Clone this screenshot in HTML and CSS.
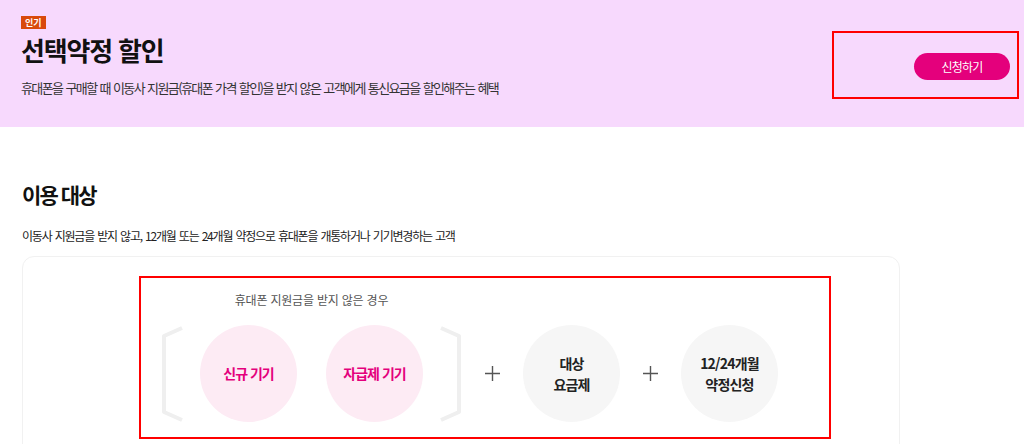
FILE: index.html
```html
<!DOCTYPE html>
<html lang="ko">
<head>
  <meta charset="UTF-8" />
  <meta name="viewport" content="width=device-width, initial-scale=1.0"/>
  <title>선택약정 할인</title>
  <link rel="stylesheet" href="styles.css">
</head>
<body>
  <header class="hero">
    <div class="hero-text">
      <span class="badge">인기</span>
      <h1>선택약정 할인</h1>
      <p class="hero-desc">휴대폰을 구매할 때 이동사 지원금(휴대폰 가격 할인)을 받지 않은 고객에게 통신요금을 할인해주는 혜택</p>
    </div>
    <div class="apply-box">
      <button class="apply-btn">신청하기</button>
    </div>
  </header>

  <section class="target">
    <h2>이용 대상</h2>
    <p class="target-desc">이동사 지원금을 받지 않고, 12개월 또는 24개월 약정으로 휴대폰을 개통하거나 기기변경하는 고객</p>

    <div class="card">
      <div class="combo-box">
        <div class="combo">
          <div class="group">
            <p class="group-label">휴대폰 지원금을 받지 않은 경우</p>
            <div class="group-row">
              <svg class="bracket" width="23" height="96" viewBox="0 0 23 96">
                <polyline points="21,2 3,10 3,86 21,94" fill="none" stroke="#efefef" stroke-width="4" stroke-linejoin="round"/>
              </svg>
              <div class="circle pink">신규 기기</div>
              <div class="circle pink">자급제 기기</div>
              <svg class="bracket" width="23" height="96" viewBox="0 0 23 96">
                <polyline points="2,2 20,10 20,86 2,94" fill="none" stroke="#efefef" stroke-width="4" stroke-linejoin="round"/>
              </svg>
            </div>
          </div>
          <div class="plus">
            <svg width="15" height="15" viewBox="0 0 15 15">
              <path d="M7.5 0 V15 M0 7.5 H15" stroke="#555" stroke-width="1.4"/>
            </svg>
          </div>
          <div class="circle gray">대상<br>요금제</div>
          <div class="plus">
            <svg width="15" height="15" viewBox="0 0 15 15">
              <path d="M7.5 0 V15 M0 7.5 H15" stroke="#555" stroke-width="1.4"/>
            </svg>
          </div>
          <div class="circle gray">12/24개월<br>약정신청</div>
        </div>
      </div>
    </div>
  </section>
</body>
</html>
```

FILE: styles.css
```css
body {
  margin: 0;
  font-family: "Noto Sans CJK KR", sans-serif;
  color: #111;
  background-color: #fff;
  overflow: hidden;
}
.hero {
  display: flex;
  justify-content: space-between;
  align-items: flex-start;
  height: 127px;
  box-sizing: border-box;
  padding: 16px 5px 0 21px;
  background-color: #f7d9fd;
}
.hero-text {
  display: flex;
  flex-direction: column;
  align-items: flex-start;
}
.badge {
  padding: 0 4px;
  font-size: 9px;
  line-height: 13px;
  font-weight: 700;
  color: #fff;
  background-color: #d94a0c;
}
.hero h1 {
  margin: 4px 0 0;
  font-size: 26px;
  line-height: 34px;
  font-weight: 700;
  letter-spacing: -1.2px;
}
.hero-desc {
  margin: 12px 0 0;
  font-size: 13px;
  line-height: 18px;
  letter-spacing: -1.6px;
  word-spacing: 1px;
  color: #333;
}
.apply-box {
  display: flex;
  justify-content: flex-end;
  width: 187px;
  box-sizing: border-box;
  margin-top: 15px;
  padding: 22px 9px 19px;
  outline: 2px solid #f00;
  outline-offset: -2px;
}
.apply-btn {
  width: 96px;
  height: 27px;
  border: none;
  border-radius: 14px;
  background-color: #e4007c;
  color: #fff;
  font-family: inherit;
  font-size: 12px;
  letter-spacing: -0.8px;
  cursor: pointer;
}
.target {
  padding: 52px 22px 0;
}
.target h2 {
  margin: 0;
  font-size: 21px;
  line-height: 30px;
  font-weight: 700;
  letter-spacing: -1.9px;
}
.target-desc {
  margin: 18px 0 0;
  font-size: 12px;
  line-height: 18px;
  letter-spacing: -1.2px;
  word-spacing: 1px;
  color: #222;
}
.card {
  margin: 11px 102px 0 0;
  padding: 19px 0 60px 116px;
  border: 1px solid #f1f1f1;
  border-radius: 12px;
}
.combo-box {
  display: inline-block;
  padding: 15px 53px 17px 22px;
  outline: 2px solid #f00;
  outline-offset: -2px;
}
.combo {
  display: flex;
  align-items: flex-end;
  gap: 23px;
}
.group {
  display: flex;
  flex-direction: column;
  align-items: center;
}
.group-label {
  margin: 0 0 16px;
  font-size: 12px;
  line-height: 18px;
  letter-spacing: -0.2px;
  color: #555;
}
.group-row {
  display: flex;
  align-items: center;
}
.group-row .circle {
  margin: 0 16px;
}
.group-row .circle + .circle {
  margin-left: 0;
  margin-right: 16px;
}
.group-row .circle:first-of-type {
  margin-right: 29px;
}
.circle {
  display: flex;
  align-items: center;
  justify-content: center;
  flex: none;
  width: 97px;
  height: 97px;
  border-radius: 50%;
  text-align: center;
  font-size: 14px;
  line-height: 21px;
  font-weight: 700;
}
.circle.pink {
  background-color: #fdebf4;
  color: #e4007c;
  letter-spacing: -1px;
}
.circle.gray {
  background-color: #f6f6f6;
  color: #222;
  letter-spacing: -0.8px;
}
.plus {
  display: flex;
  align-items: center;
  height: 97px;
}
```
